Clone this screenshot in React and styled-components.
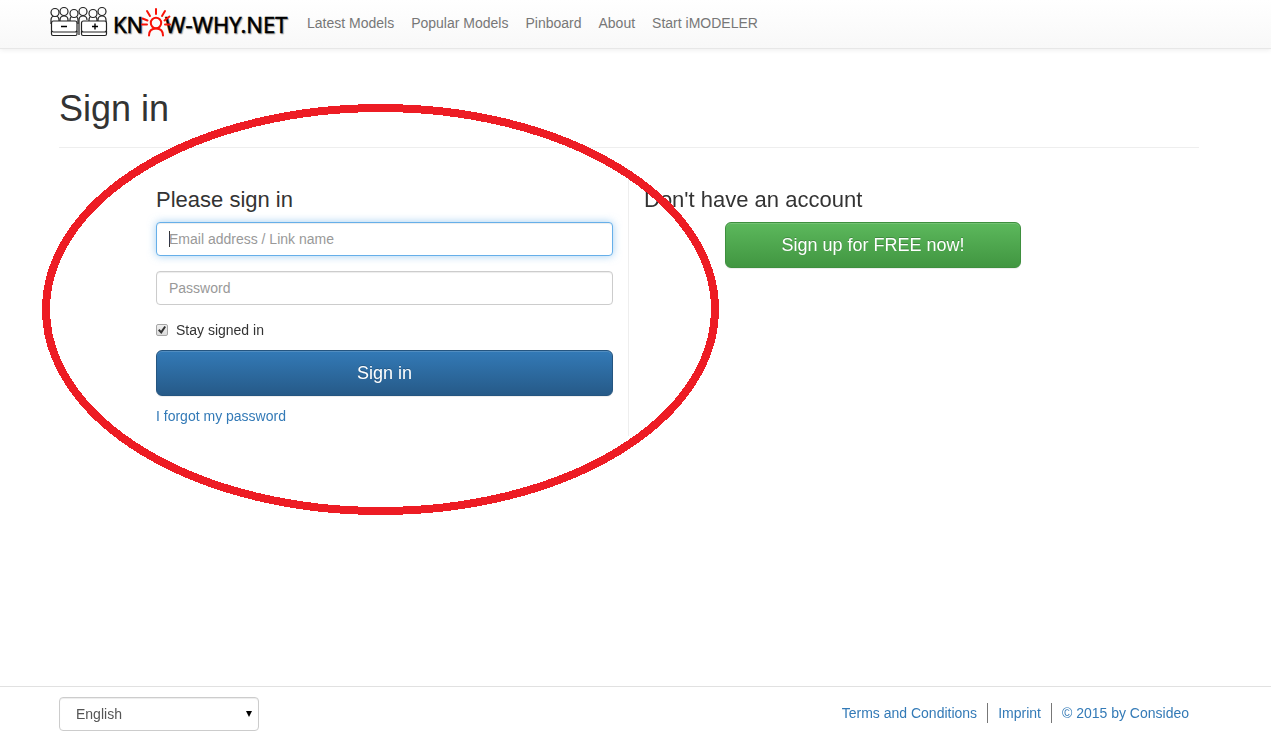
import React from 'react';
import styled, { createGlobalStyle } from 'styled-components';

const GlobalStyle = createGlobalStyle`
    * {
        box-sizing: border-box;
    }
    body {
        margin: 0;
        background-color: #fff;
        color: #333;
        font-family: "Liberation Sans", Arial, Helvetica, sans-serif;
        font-size: 14px;
        line-height: 20px;
    }
    input, button, select {
        font-family: inherit;
    }
    a {
        color: #337ab7;
        text-decoration: none;
    }
`;

const Page = styled.div`
    position: relative;
    min-height: 100vh;
    display: flex;
    flex-direction: column;
`;

const Navbar = styled.header`
    height: 49px;
    padding-right: 13px;
    border-bottom: 1px solid #e7e7e7;
    background-image: linear-gradient(to bottom, #fff 0%, #f8f8f8 100%);
    box-shadow: 0 1px 5px rgba(0, 0, 0, 0.075);
`;

const NavInner = styled.div`
    width: 100%;
    max-width: 1158px;
    margin: 0 auto;
    display: flex;
    align-items: center;
`;

const Brand = styled.a`
    display: block;
    height: 48px;
    width: 240px;
    margin-right: 17px;
`;

const Menu = styled.nav`
    display: flex;
    gap: 17px;
    padding-bottom: 2px;

    a {
        color: #777;
        text-shadow: 0 1px 0 rgba(255, 255, 255, 0.25);
    }
`;

const Main = styled.main`
    flex: 1;
    padding-right: 13px;
`;

const Container = styled.div`
    width: 100%;
    max-width: 1140px;
    margin: 0 auto;
`;

const PageHeader = styled.div`
    padding: 40px 0 18px;
    margin-bottom: 20px;
    border-bottom: 1px solid #eee;

    h1 {
        margin: 0;
        font-size: 36px;
        line-height: 40px;
        font-weight: 400;
    }
`;

const Columns = styled.div`
    display: grid;
    grid-template-columns: 1fr 1fr;
    padding: 0 97px;
`;

const Column = styled.section`
    padding: 20px 0 10px;
    padding-right: ${props => (props.$divided ? '15px' : '0')};
    padding-left: ${props => (props.$divided ? '0' : '15px')};
    border-right: ${props => (props.$divided ? '1px solid #eee' : 'none')};

    h2 {
        margin: 0 0 10px;
        font-size: 22px;
        line-height: 24px;
        font-weight: 400;
    }
`;

const Field = styled.input`
    display: block;
    width: 100%;
    height: 34px;
    margin-bottom: 15px;
    padding: 6px 12px;
    border: 1px solid #ccc;
    border-radius: 4px;
    background-color: #fff;
    box-shadow: inset 0 1px 1px rgba(0, 0, 0, 0.075);
    color: #555;
    font-size: 14px;
    line-height: 20px;

    &::placeholder {
        color: #999;
    }
    &:focus {
        outline: 0;
        border-color: #66afe9;
        box-shadow: inset 0 1px 1px rgba(0, 0, 0, 0.075), 0 0 8px rgba(102, 175, 233, 0.6);
    }
    /* steady caret while the field is empty */
    &:focus:placeholder-shown {
        caret-color: transparent;
        background: linear-gradient(#333, #333) 12px 8px / 1px 16px no-repeat #fff;
    }
`;

const CheckLabel = styled.label`
    display: flex;
    align-items: center;
    gap: 8px;
    margin-bottom: 10px;

    input {
        appearance: none;
        width: 12px;
        height: 12px;
        margin: 0;
        display: grid;
        place-items: center;
        border: 1px solid #a6a6a6;
        border-radius: 2px;
        background-image: linear-gradient(to bottom, #efefef, #dcdcdc);
    }
    input:checked::after {
        content: "";
        width: 8px;
        height: 8px;
        background-color: #333;
        clip-path: polygon(0 55%, 18% 38%, 38% 58%, 80% 0, 100% 12%, 42% 100%);
    }
`;

const Button = styled.button`
    display: block;
    width: ${props => (props.$block ? '100%' : 'auto')};
    height: 46px;
    margin: 0 auto 10px;
    padding: 10px ${props => (props.$block ? '16px' : '55px')};
    border: 1px solid ${props => (props.$green ? '#3e8f3e' : '#245580')};
    border-radius: 6px;
    background-image: ${props => (props.$green
        ? 'linear-gradient(to bottom, #5cb85c 0%, #419641 100%)'
        : 'linear-gradient(to bottom, #337ab7 0%, #265a88 100%)')};
    box-shadow: inset 0 1px 0 rgba(255, 255, 255, 0.15), 0 1px 1px rgba(0, 0, 0, 0.075);
    color: #fff;
    font-size: 18px;
    line-height: 24px;
    text-shadow: 0 -1px 0 rgba(0, 0, 0, 0.2);
    cursor: pointer;
`;

const Footer = styled.footer`
    padding: 10px 13px 10px 0;
    border-top: 1px solid #e1e1e1;

    ${Container} {
        display: flex;
        justify-content: space-between;
        align-items: center;
    }
`;

const LanguageBox = styled.div`
    display: grid;
    align-items: center;

    select, svg {
        grid-area: 1 / 1;
    }
    select {
        appearance: none;
        width: 200px;
        height: 34px;
        padding: 6px 16px;
        border: 1px solid #ccc;
        border-radius: 4px;
        background-color: #fff;
        box-shadow: inset 0 1px 1px rgba(0, 0, 0, 0.075);
        color: #555;
        font-size: 14px;
        line-height: 20px;
    }
    svg {
        justify-self: end;
        margin-right: 7px;
        pointer-events: none;
    }
`;

const FooterLinks = styled.nav`
    display: flex;
    padding-bottom: 2px;

    a {
        padding: 0 10px;
    }
    a + a {
        border-left: 1px solid #777;
    }
`;

const Highlight = styled.svg`
    position: absolute;
    left: 42px;
    top: 104px;
    pointer-events: none;
`;

const LogoText = styled.text`
    font-family: "Noto Sans", "Open Sans", sans-serif;
    font-size: 22px;
    fill: #000;
    stroke: #000;
    stroke-width: 0.5;
    text-shadow: 1px 1px 1px rgba(0, 0, 0, 0.3);
`;

const Person = ({ x, y }) => (
    <g>
        <path d={`M${x - 4} 24v-4q0-4 4-4t4 4v4`} />
        <circle cx={x} cy={y} r="4" fill="#fdfdfd" />
    </g>
);

const Logo = () => (
    <svg width="240" height="48" viewBox="0 0 240 48" role="img" aria-label="KNOW-WHY.NET">
        <g fill="none" stroke="#222" strokeWidth="1.2">
            <Person x={5} y={12.5} />
            <Person x={14} y={11.5} />
            <Person x={24} y={13.5} />
            <Person x={43} y={13.5} />
            <Person x={52} y={11.5} />
            <path d="M29 35V20q0-4 4-4t4 4" />
            <circle cx="33" cy="11.5" r="4" fill="#fdfdfd" />
            <path d="M1.500 31v3q0 1.500 1.500 1.500h22.500q1.500 0 1.500-1.500v-3M31.500 31v3q0 1.500 1.500 1.500h22q1.500 0 1.500-1.500v-3" fill="#fff" />
            <rect x="1.500" y="21" width="25.500" height="11" rx="2" fill="#fff" />
            <rect x="31.500" y="21" width="25" height="11" rx="2" fill="#fff" />
            <path d="M11 26.500h6M42 26.500h6M45 23.500v6" stroke="#000" strokeWidth="1.400" />
        </g>
        <LogoText x="63" y="33">KN</LogoText>
        <LogoText x="115" y="33">W-WHY.NET</LogoText>
        <g fill="none" stroke="#f91208" strokeWidth="2" strokeLinecap="round">
            <circle cx="106" cy="23" r="5.200" />
            <path d="M99 35.500q0-7 7-7t7 7M106 14V9M100 16l-3-5M112 16l3-5M97.500 20.500l-5-2M114.500 20.500l5-4M97 24.500h-5M115 24.500h5" />
        </g>
    </svg>
);

const App = () => {
    return (
        <Page>
            <GlobalStyle />
            <Navbar>
                <NavInner>
                    <Brand href="#"><Logo /></Brand>
                    <Menu>
                        <a href="#latest">Latest Models</a>
                        <a href="#popular">Popular Models</a>
                        <a href="#pinboard">Pinboard</a>
                        <a href="#about">About</a>
                        <a href="#start">Start iMODELER</a>
                    </Menu>
                </NavInner>
            </Navbar>
            <Main>
                <Container>
                    <PageHeader><h1>Sign in</h1></PageHeader>
                    <Columns>
                        <Column as="form" $divided>
                            <h2>Please sign in</h2>
                            <Field type="text" aria-label="Email address / Link name" placeholder="Email address / Link name" autoFocus />
                            <Field type="password" aria-label="Password" placeholder="Password" />
                            <CheckLabel>
                                <input type="checkbox" defaultChecked />
                                Stay signed in
                            </CheckLabel>
                            <Button type="submit" $block>Sign in</Button>
                            <a href="#forgot">I forgot my password</a>
                        </Column>
                        <Column>
                            <h2>Don't have an account</h2>
                            <Button type="button" $green>Sign up for FREE now!</Button>
                        </Column>
                    </Columns>
                </Container>
            </Main>
            <Footer>
                <Container>
                    <LanguageBox>
                        <select aria-label="Language" defaultValue="en">
                            <option value="en">English</option>
                            <option value="de">Deutsch</option>
                        </select>
                        <svg width="6" height="6"><path d="M0 0h6L3 6z" fill="#000" /></svg>
                    </LanguageBox>
                    <FooterLinks>
                        <a href="#terms">Terms and Conditions</a>
                        <a href="#imprint">Imprint</a>
                        <a href="#consideo">© 2015 by Consideo</a>
                    </FooterLinks>
                </Container>
            </Footer>
            <Highlight width="677" height="411" viewBox="0 0 677 411" aria-hidden="true">
                <ellipse cx="338.5" cy="205.5" rx="334.5" ry="201.5" fill="none" stroke="#ed1c24" strokeWidth="8" shapeRendering="crispEdges" />
            </Highlight>
        </Page>
    );
};

export default App;
